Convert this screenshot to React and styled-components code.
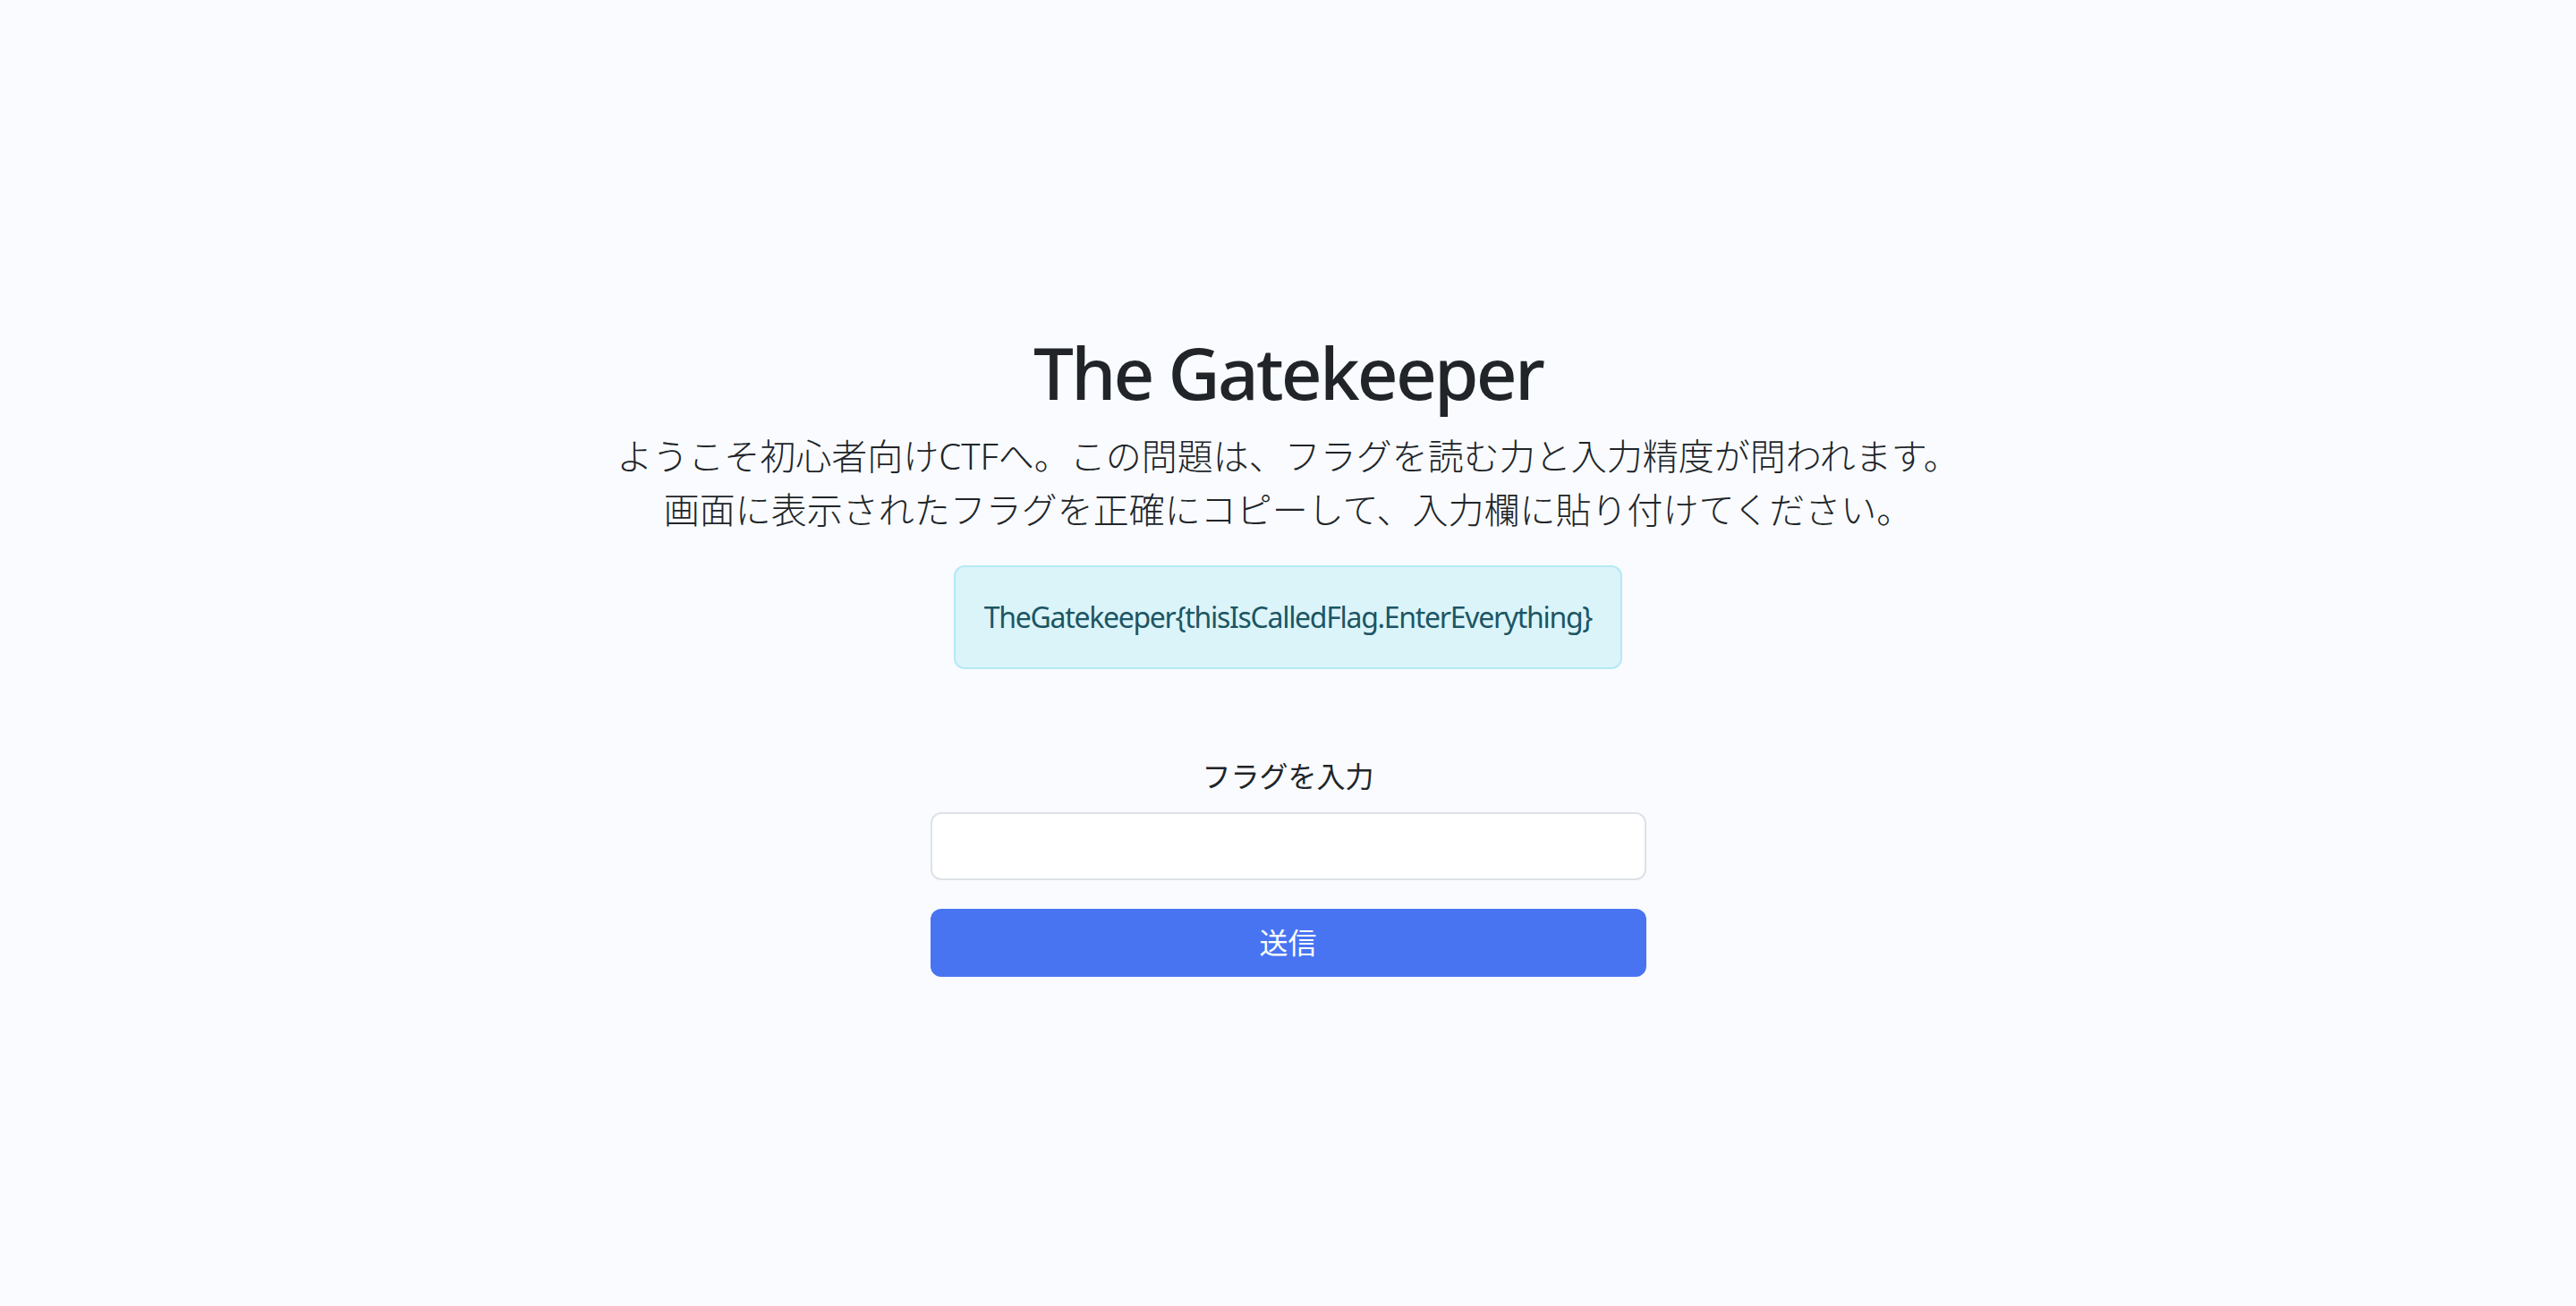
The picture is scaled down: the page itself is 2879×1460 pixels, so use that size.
import React from 'react'
import { useState } from 'react'
import styled, { createGlobalStyle } from 'styled-components'

const FLAG = 'TheGatekeeper{thisIsCalledFlag.EnterEverything}'

const App = () => {

    const [value, setValue] = useState('')

    const handleSubmit = (e) => {
        e.preventDefault()
    }

    return (
        <>
            <GlobalStyle />
            <Page>
                <Title>The Gatekeeper</Title>
                <Lead>
                    ようこそ初心者向けCTFへ。この問題は、フラグを読む力と入力精度が問われます。<br />
                    画面に表示されたフラグを正確にコピーして、入力欄に貼り付けてください。
                </Lead>
                <FlagBox>{FLAG}</FlagBox>
                <Form onSubmit={handleSubmit}>
                    <Label htmlFor='flag'>フラグを入力</Label>
                    <Input
                        id='flag'
                        value={value}
                        onChange={e => setValue(e.target.value)}
                    />
                    <SubmitButton type='submit'>送信</SubmitButton>
                </Form>
            </Page>
        </>
    )
}

export default App


const GlobalStyle = createGlobalStyle`
    *{ box-sizing: border-box; }
    body{
        margin: 0;
        background-color: #f9fbfe;
        color: #212529;
        font-family: "Noto Sans", "Noto Sans CJK JP", sans-serif;
    }
`

const Page = styled.main`
    min-height: 100vh;
    display: flex;
    flex-direction: column;
    align-items: center;
    justify-content: center;
    text-align: center;
`

const Title = styled.h1`
    margin: 0 0 16px;
    font-size: 80px;
    font-weight: 500;
    line-height: 1.2;
    letter-spacing: -2.8px;
    color: #212529;
`

const Lead = styled.p`
    margin: 0 0 32px;
    font-size: 40px;
    font-weight: 300;
    line-height: 1.5;
    color: #212529;
`

const FlagBox = styled.div`
    display: inline-block;
    padding: 32px;
    font-size: 32px;
    font-weight: 400;
    line-height: 1.5;
    letter-spacing: -1.3px;
    color: #1d5564;
    background-color: #daf4f9;
    border: 2px solid #b4e9f6;
    border-radius: 12px;
`

const Form = styled.form`
    width: 800px;
    margin-top: 96px;
    display: flex;
    flex-direction: column;
`

const Label = styled.label`
    margin-bottom: 16px;
    font-size: 32px;
    line-height: 1.5;
    color: #212529;
`

const Input = styled.input`
    height: 76px;
    padding: 12px 24px;
    font-size: 32px;
    font-family: inherit;
    color: #212529;
    background-color: #fff;
    border: 2px solid #dee2e6;
    border-radius: 12px;
    outline: none;
`

const SubmitButton = styled.button`
    height: 76px;
    margin-top: 32px;
    font-size: 32px;
    font-family: inherit;
    line-height: 1.5;
    color: #fff;
    background-color: #4874f2;
    border: none;
    border-radius: 12px;
    cursor: pointer;
`
